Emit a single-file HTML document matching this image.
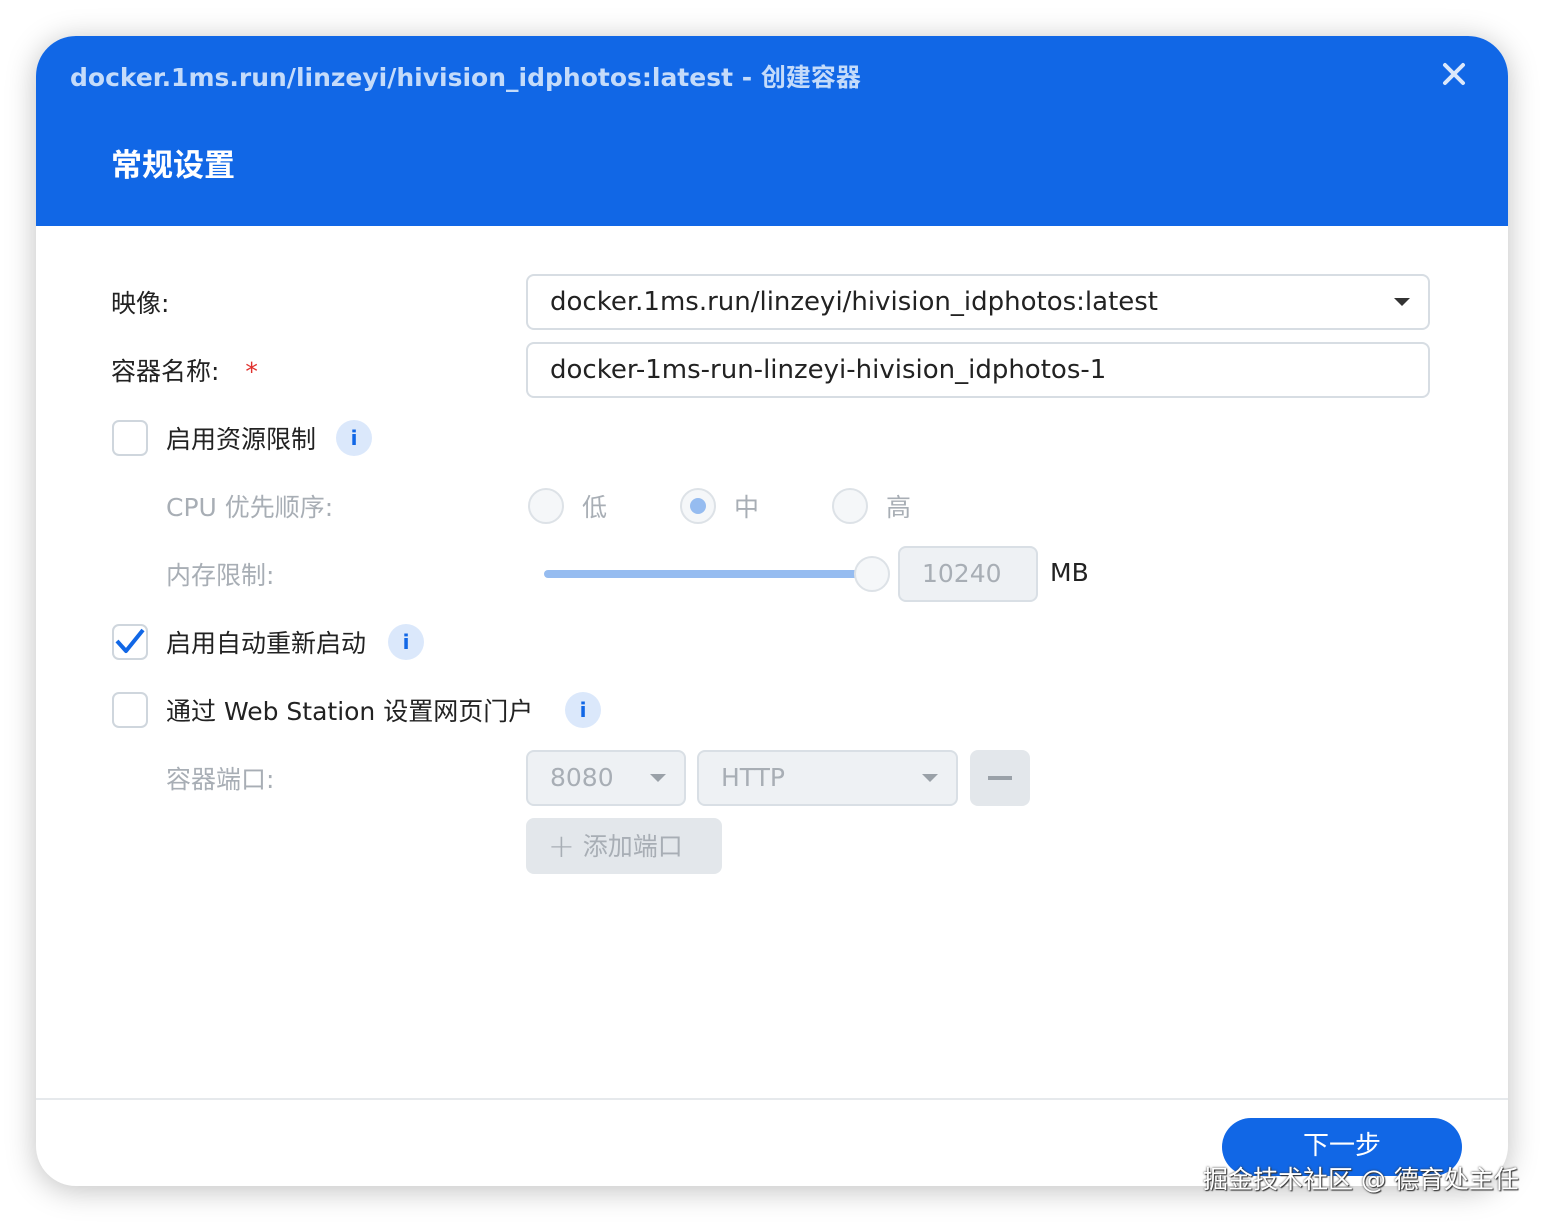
<!DOCTYPE html>
<html><head><meta charset="utf-8"><style>
*{box-sizing:border-box;margin:0;padding:0}
body{width:1544px;height:1222px;background:#fff;font-family:"DejaVu Sans","Noto Sans CJK SC",sans-serif;position:relative;overflow:hidden}
.dlg{position:absolute;left:36px;top:36px;width:1472px;height:1150px;border-radius:40px;background:#fff;box-shadow:0 4px 30px rgba(0,0,0,.25);overflow:hidden}
.hdr{position:absolute;left:0;top:0;width:100%;height:190px;background:#1167e6}
.t{position:absolute;left:34px;top:22px;font-size:25px;font-weight:bold;color:#c4dbfa;white-space:nowrap}
.x{position:absolute;left:1404px;top:24px;}
.h2{position:absolute;left:75px;top:104px;font-size:31px;font-weight:bold;color:#fff}
.a{position:absolute;white-space:nowrap}
.lbl{font-size:25px;color:#222}
.dim{color:#a8aeb5}
.inp{position:absolute;border:2px solid #d7dde3;border-radius:8px;background:#fff;font-size:25px;color:#222;padding-left:22px;line-height:52px;white-space:nowrap}
.big{font-size:26px}
.dis{background:#eef1f4;color:#a8aeb5;border-color:#d9dfe5}
.cb{position:absolute;width:36px;height:36px;border:2px solid #cfd6dd;border-radius:7px;background:#fff}
.info{position:absolute;width:36px;height:36px;border-radius:50%;background:#dbe8fb;color:#1167e6;font-weight:bold;font-size:20px;text-align:center;line-height:36px}
.rad{position:absolute;width:36px;height:36px;border-radius:50%;border:2px solid #dde2e7;background:#f5f7f9}
.tri{position:absolute;width:0;height:0;border-left:8px solid transparent;border-right:8px solid transparent;border-top:8px solid #333}
</style></head><body>
<div class="dlg">
<div class="hdr">
<div class="t">docker.1ms.run/linzeyi/hivision_idphotos:latest - 创建容器</div>
<svg class="x" width="28" height="28" viewBox="0 0 28 28"><path d="M5 5L23 23M23 5L5 23" stroke="#dbe8fb" stroke-width="4" stroke-linecap="round"/></svg>
<div class="h2">常规设置</div>
</div>
<div class="a lbl" style="left:75px;top:248px">映像:</div>
<div class="inp big" style="left:490px;top:238px;width:904px;height:56px">docker.1ms.run/linzeyi/hivision_idphotos:latest</div>
<div class="tri" style="left:1358px;top:262px"></div>
<div class="a lbl" style="left:75px;top:316px">容器名称: <span style="color:#e0302d;margin-left:18px">*</span></div>
<div class="inp big" style="left:490px;top:306px;width:904px;height:56px">docker-1ms-run-linzeyi-hivision_idphotos-1</div>

<div class="cb" style="left:76px;top:384px"></div>
<div class="a lbl" style="left:130px;top:384px">启用资源限制</div>
<div class="info" style="left:300px;top:384px">i</div>

<div class="a lbl dim" style="left:130px;top:452px">CPU 优先顺序:</div>
<div class="rad" style="left:492px;top:452px"></div><div class="a lbl dim" style="left:546px;top:452px">低</div>
<div class="rad" style="left:644px;top:452px"><div style="position:absolute;left:8px;top:8px;width:16px;height:16px;border-radius:50%;background:#96bcf0"></div></div><div class="a lbl dim" style="left:698px;top:452px">中</div>
<div class="rad" style="left:796px;top:452px"></div><div class="a lbl dim" style="left:850px;top:452px">高</div>

<div class="a lbl dim" style="left:130px;top:520px">内存限制:</div>
<div class="a" style="left:508px;top:534px;width:320px;height:8px;border-radius:4px;background:#96bcf0"></div>
<div class="rad" style="left:818px;top:520px;background:#f5f7f9"></div>
<div class="inp dis" style="left:862px;top:510px;width:140px;height:56px;padding-left:22px">10240</div>
<div class="a lbl" style="left:1014px;top:522px">MB</div>

<div class="cb" style="left:76px;top:588px"><svg width="32" height="32" viewBox="0 0 32 32" style="position:absolute;left:0;top:0"><path d="M3 15L12 25L29 4" stroke="#1167e6" stroke-width="4" fill="none" stroke-linejoin="round"/></svg></div>
<div class="a lbl" style="left:130px;top:588px">启用自动重新启动</div>
<div class="info" style="left:352px;top:588px">i</div>

<div class="cb" style="left:76px;top:656px"></div>
<div class="a lbl" style="left:130px;top:656px">通过 Web Station 设置网页门户</div>
<div class="info" style="left:529px;top:656px">i</div>

<div class="a lbl dim" style="left:130px;top:724px">容器端口:</div>
<div class="inp dis" style="left:490px;top:714px;width:160px;height:56px">8080</div>
<div class="tri" style="left:614px;top:738px;border-top-color:#9aa1a8"></div>
<div class="inp dis" style="left:661px;top:714px;width:261px;height:56px">HTTP</div>
<div class="tri" style="left:886px;top:738px;border-top-color:#9aa1a8"></div>
<div class="a" style="left:934px;top:714px;width:60px;height:56px;border-radius:8px;background:#e3e7eb"><div style="position:absolute;left:18px;top:26px;width:24px;height:4px;background:#9aa1a8"></div></div>
<div class="a" style="left:490px;top:782px;width:196px;height:56px;border-radius:8px;background:#e3e7eb;color:#a8aeb5;font-size:25px;line-height:56px;padding-left:22px"><span style="font-size:32px;font-weight:300;vertical-align:-2px">+</span> 添加端口</div>

<div class="a" style="left:0;top:1062px;width:100%;height:2px;background:#e6e9ec"></div>
<div class="a" style="left:1186px;top:1082px;width:240px;height:58px;border-radius:29px;background:#1167e6;color:#fff;font-size:26px;text-align:center;line-height:56px">下一步</div>
</div>
<div class="a" style="left:1203px;top:1160px;font-size:25px;color:#fff;text-shadow:0 0 2px #333,1px 1px 1px #333">掘金技术社区 @ 德育处主任</div>
</body></html>
